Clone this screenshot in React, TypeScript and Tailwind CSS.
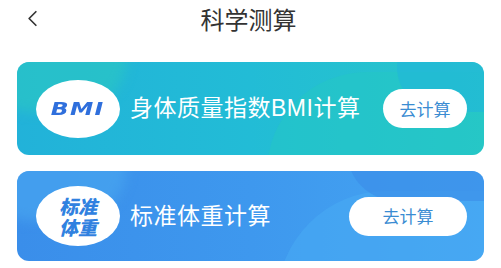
import { ChevronLeft } from 'lucide-react';

const font = { fontFamily: '"Noto Sans CJK SC", "Liberation Sans", sans-serif' };
const cardText = { fontFamily: '"Liberation Sans", "Noto Sans CJK SC", sans-serif' };

export default function App() {
  return (
    <div className="w-[501px] h-[268px] bg-white overflow-hidden" style={font}>
      {/* header */}
      <div className="relative h-[38px] flex items-center justify-center">
        <ChevronLeft className="absolute left-[19px] top-[5px] w-[27px] h-[27px] text-[#333]" strokeWidth={1.5} />
        <span className="text-[24px] text-[#333] leading-none -ml-[4px]">科学测算</span>
      </div>

      <div className="flex flex-col gap-[16px] px-[17px] pt-[24px]">
        {/* BMI card */}
        <div className="relative h-[93px] rounded-[12px] overflow-hidden bg-gradient-to-r from-[#22b2d9] via-[#22bcd6] to-[#28c6c9] flex items-center pl-[19px] pr-[17px]">
          <div className="absolute -left-[40px] -top-[60px] w-[150px] h-[110px] rounded-full bg-[#2cc8c2]/60 blur-[6px]" />
          <div className="absolute left-[250px] top-[10px] w-[300px] h-[200px] rounded-full bg-[#24c7c4]/50" />
          <div className="absolute left-[380px] -top-[40px] w-[160px] h-[90px] rounded-full bg-[#21b6da]/60" />
          <div className="relative w-[84px] h-[58px] rounded-[50%] bg-white flex items-center justify-center">
            <span className="text-[18px] font-black italic tracking-[1px] text-[#2f6fdc] leading-none scale-x-[1.3]" style={{ fontFamily: '"DejaVu Sans", sans-serif' }}>BMI</span>
          </div>
          <span className="relative ml-[10px] text-[23px] tracking-[0.5px] text-white leading-none" style={cardText}>身体质量指数BMI计算</span>
          <button className="relative ml-auto w-[84px] h-[39px] rounded-full bg-white text-[17px] text-[#3a8cd2]">去计算</button>
        </div>

        {/* weight card */}
        <div className="relative h-[90px] rounded-[12px] overflow-hidden bg-gradient-to-r from-[#3a8eea] via-[#3e98ee] to-[#45a5f2] flex items-center pl-[19px] pr-[17px]">
          <div className="absolute -left-[40px] -top-[60px] w-[150px] h-[110px] rounded-full bg-[#4aa8f0]/60 blur-[6px]" />
          <div className="absolute left-[260px] top-[20px] w-[320px] h-[220px] rounded-full bg-[#48aaf4]/60" />
          <div className="absolute left-[330px] -top-[70px] w-[200px] h-[100px] rounded-full bg-[#3a8ce8]/60" />
          <div className="relative w-[84px] h-[60px] rounded-[50%] bg-white flex items-center justify-center">
            <span className="w-[40px] text-center text-[19px] font-black italic text-[#3081e0] leading-[21px]">标准体重</span>
          </div>
          <span className="relative ml-[10px] text-[23px] tracking-[0.5px] text-white leading-none" style={cardText}>标准体重计算</span>
          <button className="relative ml-auto w-[118px] h-[39px] rounded-full bg-white text-[17px] text-[#3a8cd2]">去计算</button>
        </div>
      </div>
    </div>
  );
}
